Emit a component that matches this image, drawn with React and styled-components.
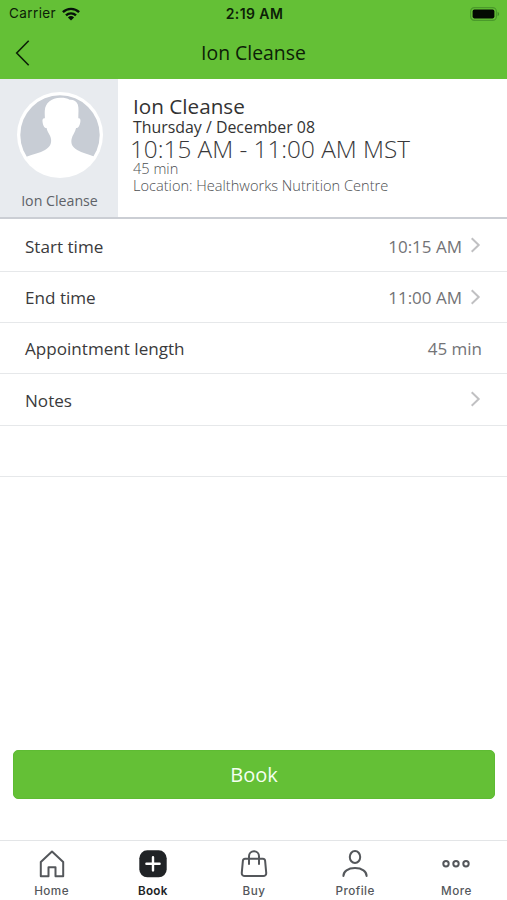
import React from "react";
import styled, { createGlobalStyle } from "styled-components";

const GlobalStyle = createGlobalStyle`
  * { box-sizing: border-box; }
  body { margin: 0; background: #fff; font-family: "Open Sans", "Noto Sans", sans-serif; }
`;

const Screen = styled.div`
  width: 507px;
  height: 900px;
  display: flex;
  flex-direction: column;
  background: #fff;
  overflow: hidden;
`;

const Header = styled.header`
  height: 79px;
  flex: none;
  background: #64c036;
  color: #0c2007;
`;

const StatusBar = styled.div`
  height: 27px;
  display: grid;
  grid-template-columns: 1fr auto 1fr;
  align-items: center;
  padding: 0 7px 0 9px;
  font: 13.5px/27px Inter, sans-serif;
`;

const Carrier = styled.div`
  display: flex;
  align-items: center;
  gap: 6px;
  letter-spacing: 0.4px;
`;

const Clock = styled.div`
  font-weight: 600;
  font-size: 14px;
  letter-spacing: 0.4px;
`;

const BatteryWrap = styled.div`
  display: flex;
  justify-content: flex-end;
`;

const NavBar = styled.div`
  height: 52px;
  display: grid;
  grid-template-columns: 48px 1fr 48px;
  align-items: center;
`;

const BackButton = styled.button`
  display: flex;
  border: 0;
  padding: 0 0 0 15px;
  background: none;
  color: inherit;
`;

const Title = styled.h1`
  margin: 0;
  font-size: 19.4px;
  line-height: 52px;
  height: 52px;
  font-weight: 400;
  text-align: center;
`;

const Summary = styled.section`
  height: 140px;
  flex: none;
  display: flex;
  border-bottom: 2px solid #cbced4;
`;

const Provider = styled.div`
  width: 118px;
  display: flex;
  flex-direction: column;
  align-items: center;
  padding: 13px 0 0 1px;
  background: #e8ebef;
`;

const ProviderName = styled.div`
  margin-top: 12px;
  font-size: 14.2px;
  line-height: 22px;
  color: #5e6268;
`;

const Details = styled.div`
  flex: 1;
  padding: 16px 0 0 15px;
`;

const DetailLine = styled.div`
  height: ${(p) => p.$height}px;
  line-height: ${(p) => p.$height}px;
  font-size: ${(p) => p.$size}px;
  font-weight: ${(p) => p.$weight || 400};
  color: ${(p) => p.$color || "#333"};
  margin-left: ${(p) => p.$shift || 0}px;
  white-space: nowrap;
`;

const Row = styled.div`
  height: ${(p) => p.$height}px;
  display: flex;
  align-items: center;
  padding: ${(p) => p.$top || 1}px 25px 0;
  border-bottom: 1px solid #e6e8ea;
  font-size: 17.1px;
  color: #3a3a3c;
`;

const RowValue = styled.span`
  margin-left: auto;
  font-size: 17px;
  color: #737376;
`;

const Chevron = styled.svg`
  margin: -2px 1px 0 8px;
  flex: none;
`;

const Spacer = styled.div`
  flex: 1;
`;

const BookButton = styled.button`
  height: 49px;
  flex: none;
  margin: 0 12px 41px 13px;
  padding: 0;
  border: 1px solid #5ebb33;
  border-radius: 5px;
  background: #64c036;
  color: #f4fff0;
  font: 20px/47px "Open Sans", sans-serif;
`;

const TabBar = styled.nav`
  height: 60px;
  flex: none;
  display: grid;
  grid-template-columns: repeat(5, 1fr);
  border-top: 1px solid #e3e5e7;
  padding-left: 1px;
`;

const Tab = styled.div`
  display: flex;
  flex-direction: column;
  align-items: center;
  padding-top: 8px;
  color: ${(p) => (p.$active ? "#202326" : "#54575b")};
  font: ${(p) => (p.$active ? 600 : 500)} 11.7px/16px Inter, sans-serif;
  letter-spacing: ${(p) => (p.$active ? 0.3 : 0.45)}px;
  svg { margin-bottom: 4px; flex: none; }
`;

const iconProps = { width: 30, height: 30, viewBox: "0 0 30 30", fill: "none", stroke: "currentColor", strokeWidth: 2 };

const HomeIcon = () => (
  <svg {...iconProps}>
    <path d="M15 2.5 3.8 13v14.2h7.7v-9h7v9h7.7V13Z" strokeLinejoin="round" />
  </svg>
);

const BookIcon = () => (
  <svg {...iconProps}>
    <rect x="1.3" y="1.3" width="27.4" height="27" rx="8" fill="currentColor" stroke="none" />
    <path d="M15 8.2v13.2M8.4 14.8h13.2" stroke="#fff" strokeWidth="2.4" strokeLinecap="round" />
  </svg>
);

const BuyIcon = () => (
  <svg {...iconProps}>
    <path d="M6.1 9.7h17.8c1.2 0 2 .8 2.2 2l1.1 12c.2 2.1-1 3.4-3 3.4H5.8c-2 0-3.2-1.3-3-3.4l1.1-12c.2-1.2 1-2 2.2-2Z" />
    <path d="M10 15V7.2a5 5 0 0 1 10 0V15" strokeLinecap="round" />
  </svg>
);

const ProfileIcon = () => (
  <svg {...iconProps}>
    <ellipse cx="15" cy="8" rx="5.2" ry="6" />
    <path d="M3.4 27c0-4.6 4.5-7.9 11.6-7.9s11.6 3.3 11.6 7.9" strokeLinecap="round" />
  </svg>
);

const MoreIcon = () => (
  <svg {...iconProps}>
    {[5, 15, 25].map((x) => <circle key={x} cx={x} cy="14.7" r="2.7" />)}
  </svg>
);

const WifiIcon = () => (
  <svg width="18" height="14" viewBox="0 0 18 14" fill="none" stroke="#06120a" strokeWidth="2.4">
    <path d="M.9 5.1a11.7 11.7 0 0 1 16.2 0M4 8.4a7.2 7.2 0 0 1 10 0" />
    <path d="M9 13.5 5.9 10.4a4.5 4.5 0 0 1 6.2 0Z" fill="#06120a" stroke="none" />
  </svg>
);

const BatteryIcon = () => (
  <svg width="30" height="14" viewBox="0 0 30 14">
    <rect x=".6" y=".6" width="25.8" height="12.8" rx="3.8" fill="none" stroke="#4a9a2b" strokeWidth="1.2" />
    <rect x="2.6" y="2.6" width="21.8" height="8.8" rx="1.8" fill="#030a02" />
    <path d="M27.6 4.8c2 .8 2 3.6 0 4.4Z" fill="#3f8c25" />
  </svg>
);

const Avatar = () => (
  <svg width="86" height="86" viewBox="0 0 86 86">
    <circle cx="43" cy="43" r="43" fill="#fff" />
    <circle cx="43" cy="43" r="39.7" fill="#c8cdd5" />
    <path d="M43.5 5.7C34 6 28.3 11 27.8 18.5c-.2 3 .1 5.2.1 7.8-1.9-.4-2.7.9-2.4 3.2.4 3.4 1.6 6.8 4.1 6.6.9 4.6 3.9 7.2 4.4 11 .6 4.2-.7 7.9-6 10.9-4.9 2.8-12 4.2-18.6 6.7A41.5 41.5 0 0 0 43 84.5a41.5 41.5 0 0 0 34.6-19.8c-6.2-2.5-12.5-3.9-17.4-6.7-5.3-3-6.4-6.7-5.6-10.9.7-3.9 3.6-6.4 4.5-11 2.5.2 3.8-3.2 4.3-6.6.3-2.3-.4-3.6-2.1-3.2 0-4.8.7-10-.5-13.7-1.2-3.5-4.3-5.2-8.2-4.9-2.4-1.5-5.8-2.1-9.1-2Z" fill="#fff" />
  </svg>
);

const ChevronIcon = () => (
  <Chevron width="11" height="16" viewBox="0 0 11 16" fill="none" stroke="#c0c0c2" strokeWidth="2">
    <path d="m1.7 1.2 7 6.8-7 6.8" />
  </Chevron>
);

const rows = [
  { label: "Start time", value: "10:15 AM", arrow: true, height: 53, top: 2 },
  { label: "End time", value: "11:00 AM", arrow: true, height: 51 },
  { label: "Appointment length", value: "45 min", height: 51 },
  { label: "Notes", value: "", arrow: true, height: 52 },
  { label: "", value: "", height: 51 },
];

const tabs = [
  { label: "Home", Icon: HomeIcon },
  { label: "Book", Icon: BookIcon, active: true },
  { label: "Buy", Icon: BuyIcon },
  { label: "Profile", Icon: ProfileIcon },
  { label: "More", Icon: MoreIcon },
];

export default function App() {
  return (
    <Screen>
      <GlobalStyle />
      <Header>
        <StatusBar>
          <Carrier>Carrier <WifiIcon /></Carrier>
          <Clock>2:19 AM</Clock>
          <BatteryWrap><BatteryIcon /></BatteryWrap>
        </StatusBar>
        <NavBar>
          <BackButton aria-label="Back">
            <svg width="15" height="28" viewBox="0 0 15 28" fill="none" stroke="currentColor" strokeWidth="1.6">
              <path d="M13.7 1.7 1.7 14l12 12.3" />
            </svg>
          </BackButton>
          <Title>Ion Cleanse</Title>
        </NavBar>
      </Header>
      <Summary>
        <Provider>
          <Avatar />
          <ProviderName>Ion Cleanse</ProviderName>
        </Provider>
        <Details>
          <DetailLine $height={23} $size={20.7}>Ion Cleanse</DetailLine>
          <DetailLine $height={18} $size={15.9}>Thursday / December 08</DetailLine>
          <DetailLine $height={26} $size={24.3} $weight={300} $color="#38383a" $shift={-3}>10:15 AM - 11:00 AM MST</DetailLine>
          <DetailLine $height={12} $size={14.6} $weight={300} $color="#4c4e51">45 min</DetailLine>
          <DetailLine $height={22} $size={14.6} $weight={300} $color="#4c4e51">Location: Healthworks Nutrition Centre</DetailLine>
        </Details>
      </Summary>
      {rows.map((row, i) => (
        <Row key={i} $height={row.height} $top={row.top}>
          {row.label}
          <RowValue>{row.value}</RowValue>
          {row.arrow && <ChevronIcon />}
        </Row>
      ))}
      <Spacer />
      <BookButton>Book</BookButton>
      <TabBar>
        {tabs.map(({ label, Icon, active }) => (
          <Tab key={label} $active={active}><Icon />{label}</Tab>
        ))}
      </TabBar>
    </Screen>
  );
}
